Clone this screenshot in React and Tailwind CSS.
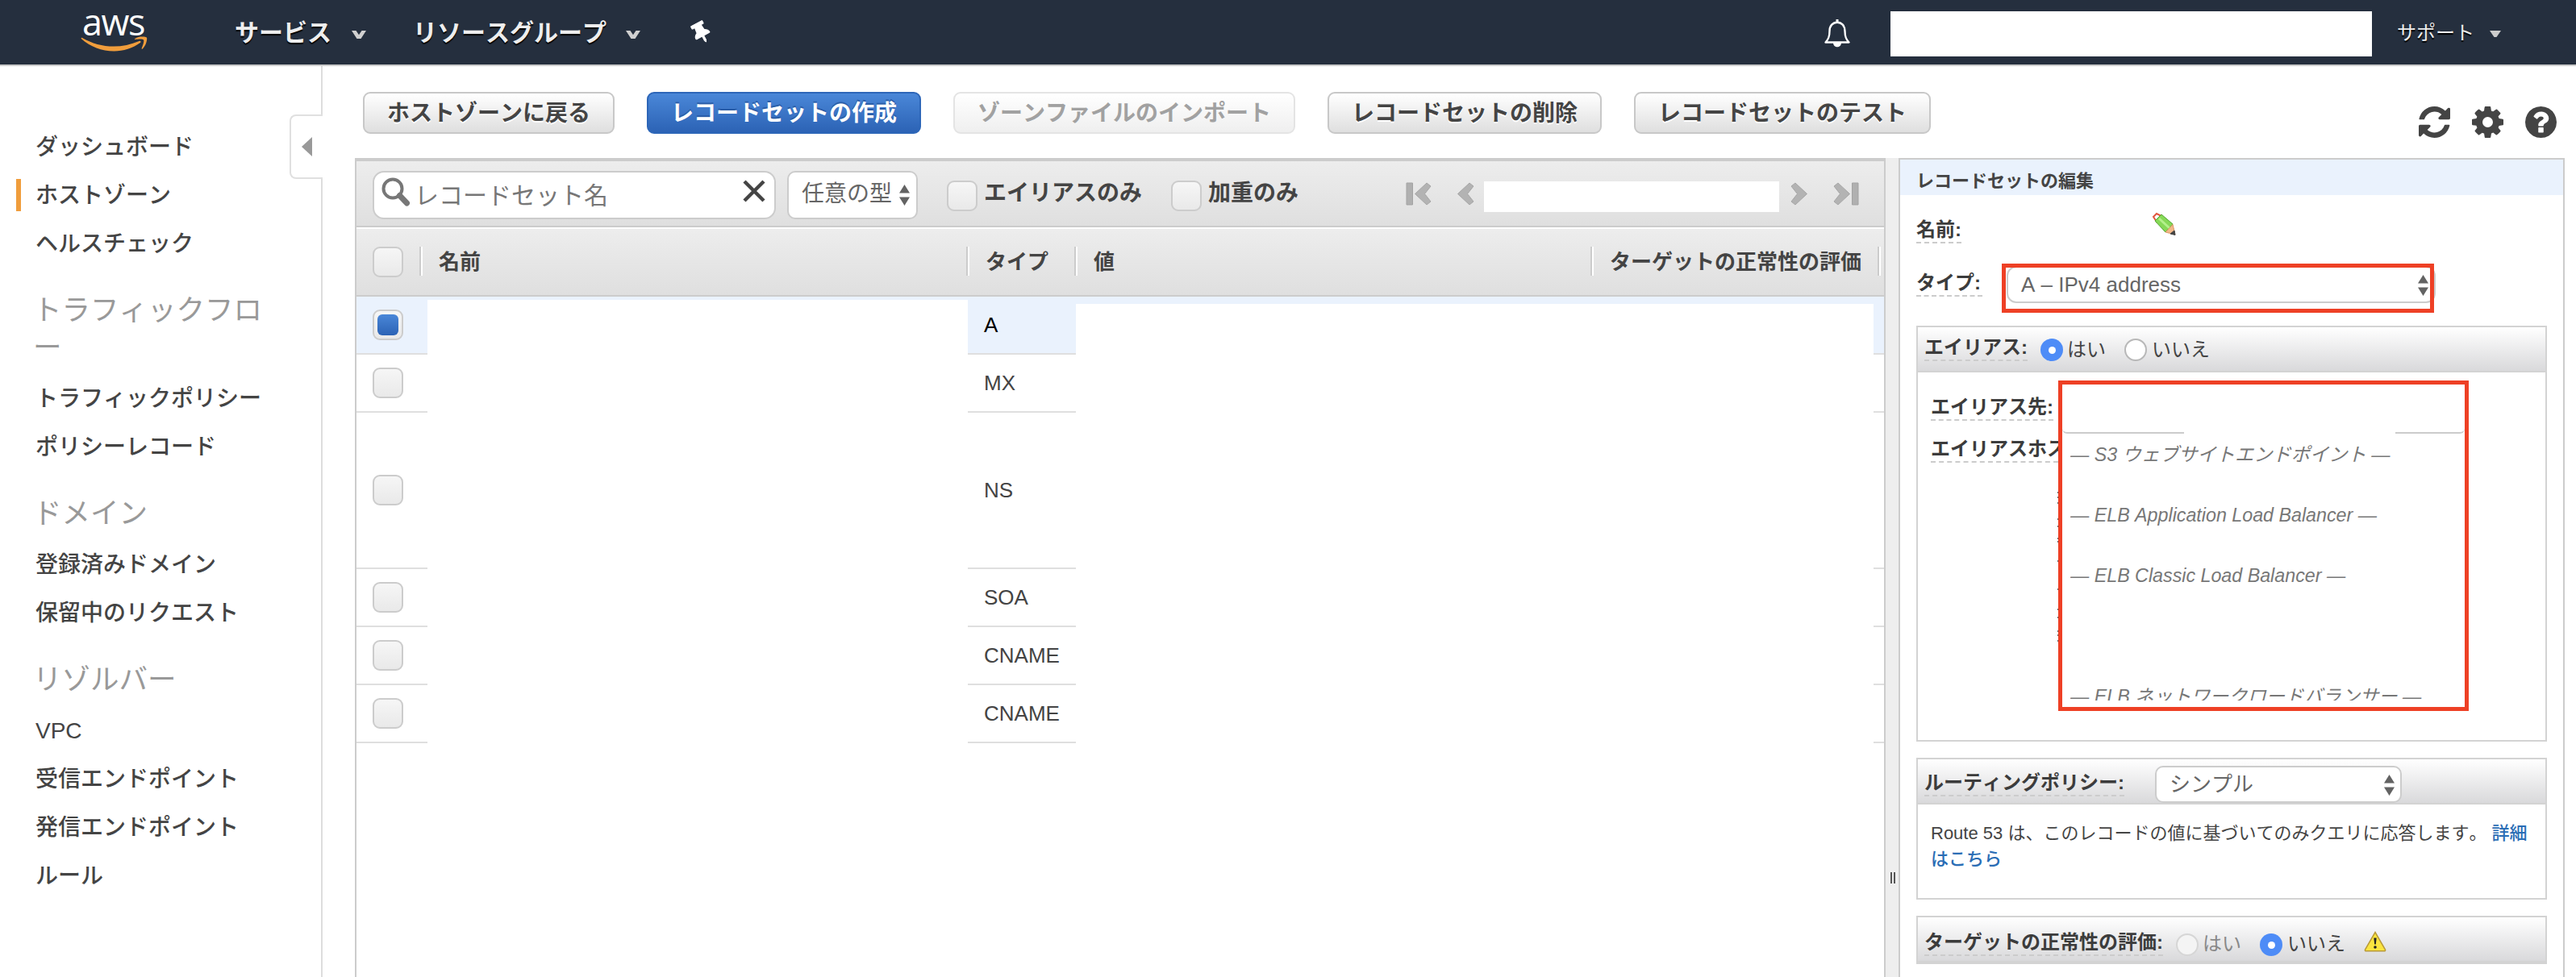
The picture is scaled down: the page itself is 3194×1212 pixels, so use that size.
import clsx from 'clsx';
import { FaThumbtack } from 'react-icons/fa';

const sidebarGroups = [
  { items: ['ダッシュボード', 'ホストゾーン', 'ヘルスチェック'] },
  { title: 'トラフィックフロー', items: ['トラフィックポリシー', 'ポリシーレコード'] },
  { title: 'ドメイン', items: ['登録済みドメイン', '保留中のリクエスト'] },
  { title: 'リゾルバー', items: ['VPC', '受信エンドポイント', '発信エンドポイント', 'ルール'] },
];

const actions = [
  { label: 'ホストゾーンに戻る' },
  { label: 'レコードセットの作成', variant: 'primary' },
  { label: 'ゾーンファイルのインポート', variant: 'disabled' },
  { label: 'レコードセットの削除' },
  { label: 'レコードセットのテスト' },
];

const records = [
  { type: 'A', selected: true },
  { type: 'MX' },
  { type: 'NS', tall: true },
  { type: 'SOA' },
  { type: 'CNAME' },
  { type: 'CNAME' },
];

const aliasTargets = [
  { label: '— S3 ウェブサイトエンドポイント —', gap: 'h-[75px]' },
  { label: '— ELB Application Load Balancer —', gap: 'h-[75px]' },
  { label: '— ELB Classic Load Balancer —', gap: 'h-[150px]' },
  { label: '— ELB ネットワークロードバランサー —', gap: 'h-[30px]' },
];

// edges of the help text that stick out from under the open menu
const helpEdges = [610, 616, 623, 643, 652, 667, 671, 695, 730, 755, 765, 782, 787, 794];

function AwsLogo() {
  return (
    <div className="ml-[100px] h-[80px] w-[84px]">
      <div className="h-[44px] pl-[2px] font-['Open_Sans',sans-serif] text-[45px] leading-[54px] tracking-[-1.5px] text-white">
        aws
      </div>
      <svg width="84" height="22" viewBox="0 0 84 22" className="relative" fill="#f09d3c">
        <path d="M1 4.2C.2 3.4.9 2.2 2 2.9 14 9.800 27 13.500 41 13.500c10.500 0 21.500-2.300 31.500-6.600 1.600-.7 2.900 1 1.400 2.200C65 15.800 52.500 19.500 41.500 19.500 26 19.500 12 13.800 1 4.200z" />
        <path d="M76 5.500c-1.200-1.500-7.500-.8-10.400-.4-.9.100-1-.6-.2-1.200 5-3.500 13.500-2.500 14.500-1.300 1 1.200-.3 9.700-5 13.800-.8.700-1.500.300-1.200-.6 1.100-2.700 3.500-8.800 2.300-10.300z" transform="translate(2 0)" />
      </svg>
    </div>
  );
}

function Caret({ className }) {
  return (
    <svg width="18" height="10" viewBox="0 0 18 10" className={className}>
      <path d="M0 0h5.500L9 5.200 12.500 0H18l-6.500 10h-5z" fill="#d0d0d0" />
    </svg>
  );
}

function Bell() {
  return (
    <svg width="34" height="36" viewBox="0 0 34 36" className="mt-[23px]" fill="none" stroke="#fff" strokeWidth="2.400">
      <path d="M17 1v4" strokeWidth="3" />
      <path d="M2.500 29.500c3.500-3.500 5-6.500 5-14 0-6.500 4-10.800 9.500-10.800s9.500 4.300 9.500 10.800c0 7.500 1.500 10.500 5 14z" strokeLinejoin="round" />
      <path d="M12 30c0 7 10 7 10 0z" fill="#fff" stroke="none" />
    </svg>
  );
}

function Header() {
  return (
    <header className="flex h-[82px] border-b-2 border-[#ccc] bg-[#252f3e] text-[#eee]">
      <AwsLogo />
      <nav className="flex flex-1 text-[30px] leading-[81px] font-bold [text-shadow:0_2px_1px_#000]">
        <span className="ml-[107px]">サービス</span>
        <Caret className="mt-[38px] ml-[25px]" />
        <span className="ml-[58px]">リソースグループ</span>
        <Caret className="mt-[38px] ml-[24px]" />
        <FaThumbtack className="mt-[27px] ml-[62px] -rotate-[28deg] text-white" size={27} />
      </nav>
      <Bell />
      <div className="mt-[14px] ml-[49px] h-[56px] w-[597px] bg-white" />
      <span className="ml-[31px] text-[24px] leading-[82px] [text-shadow:0_2px_1px_#000]">サポート</span>
      <svg width="14" height="8" viewBox="0 0 14 8" className="mt-[38px] mr-[93px] ml-[19px]">
        <path d="M0 0h14L8.500 8h-3z" fill="#ccc" />
      </svg>
    </header>
  );
}

function Sidebar() {
  return (
    <aside className="relative w-[400px] shrink-0 border-r-2 border-[#ddd] pt-[70px] text-[28px] text-[#444]">
      {sidebarGroups.map((group) => (
        <div key={group.items[0]}>
          {group.title && (
            <h2 className="mt-[30px] mb-[10px] ml-[41px] w-[296px] text-[35.5px] leading-[46px] break-all text-[#999]">
              {group.title}
            </h2>
          )}
          {group.items.map((item) => (
            <div key={item} className="flex h-[60px] items-center">
              <span className={clsx('ml-[20px] h-[40px] w-[6px]', item === 'ホストゾーン' && 'bg-[#f09d3c]')} />
              <span className="ml-[18px] pt-[2px] leading-[58px] font-medium">{item}</span>
            </div>
          ))}
        </div>
      ))}
      <div className="absolute top-[60px] -right-[2px] flex h-[80px] w-[41px] items-center rounded-l-[8px] border-y-2 border-l-2 border-[#e0e0e0] bg-white pl-[13px]">
        <svg width="13" height="24" viewBox="0 0 13 24">
          <path d="M13 0v24L0 12z" fill="#999" />
        </svg>
      </div>
    </aside>
  );
}

function ActionButton({ label, variant }) {
  return (
    <button
      className={clsx(
        'h-[52px] rounded-[9px] border-2 px-[28px] text-[28px] leading-[47px] font-bold whitespace-nowrap',
        !variant && 'border-[#c8c8c8] bg-linear-to-b from-white to-[#dfdfdf] text-[#444] [text-shadow:0_2px_0_#fff]',
        variant === 'primary' && 'border-[#2d66b8] bg-linear-to-b from-[#4a87d8] to-[#2c63b5] text-white [text-shadow:0_-2px_0_#2a5da8]',
        variant === 'disabled' && 'border-[#e4e4e4] bg-linear-to-b from-white to-[#efefef] text-[#a1a1a1]'
      )}
    >
      {label}
    </button>
  );
}

function Checkbox({ checked, className }) {
  return (
    <span
      className={clsx(
        'flex size-[38px] shrink-0 items-center justify-center rounded-[9px] border-2 border-[#ccc] bg-linear-to-b from-[#f6f6f6] to-[#e9e9e9]',
        className
      )}
    >
      {checked && <span className="size-[26px] rounded-[6px] bg-linear-to-b from-[#4a87d8] to-[#2c63b5]" />}
    </span>
  );
}

function Arrows({ className }) {
  return (
    <svg width="13" height="26" viewBox="0 0 13 26" className={className} fill="#636363">
      <path d="M6.500 0L13 10.500H0zM6.500 26L13 15.500H0z" />
    </svg>
  );
}

function Chevron({ bar, flip }) {
  return (
    <svg
      width={bar ? 32 : 22}
      height="29"
      viewBox={bar ? '0 0 32 29' : '10 0 22 29'}
      className={clsx('mt-[26px] shrink-0', flip && '-scale-x-100')}
    >
      {bar && <path d="M1 1h7.500v27H1z" fill="#b0b0b0" stroke="#a3a3a3" />}
      <path d="M26 1l5 4-7.500 9.500L31 24l-5 4L11.500 14.500z" fill="#b3b3b3" stroke="#a6a6a6" />
    </svg>
  );
}

function Toolbar() {
  return (
    <div className="flex h-[82px] border-b-2 border-[#ccc] bg-linear-to-b from-[#ededed] to-[#dfdfdf] text-[28px] text-[#444]">
      <div className="mt-[12px] ml-[20px] flex h-[60px] w-[500px] rounded-[14px] border-2 border-[#ccc] bg-white">
        <svg width="36" height="36" viewBox="0 0 36 36" className="mt-[6px] ml-[9px]" fill="none" stroke="#777">
          <circle cx="14" cy="14" r="11.500" strokeWidth="4" />
          <path d="M22.500 22.500l9 9.500" strokeWidth="7" strokeLinecap="round" />
        </svg>
        <span className="ml-[5px] flex-1 text-[30px] leading-[57px] text-[#777]">レコードセット名</span>
        <svg width="28" height="28" viewBox="0 0 28 28" className="mt-[9px] mr-[11px]">
          <path d="M2 2l24 24M26 2L2 26" stroke="#444" strokeWidth="4.500" />
        </svg>
      </div>
      <div className="mt-[12px] ml-[14px] flex h-[60px] w-[162px] rounded-[10px] border-2 border-[#ccc] bg-white">
        <span className="ml-[16px] leading-[53px] text-[#666]">任意の型</span>
        <Arrows className="mt-[15px] ml-[9px]" />
      </div>
      <Checkbox className="mt-[24px] ml-[36px]" />
      <span className="ml-[8px] w-[196px] leading-[80px] font-bold whitespace-nowrap">エイリアスのみ</span>
      <Checkbox className="mt-[24px] ml-[36px]" />
      <span className="ml-[8px] w-[245px] leading-[80px] font-bold">加重のみ</span>
      <Chevron bar />
      <div className="w-[31px]" />
      <Chevron />
      <div className="mt-[25px] mr-[14px] ml-[12px] h-[38px] w-[366px] bg-white" />
      <Chevron flip />
      <div className="w-[31px]" />
      <Chevron bar flip />
    </div>
  );
}

const Divider = () => <span className="mt-[22px] h-[36px] w-[4px] shrink-0 border-l-2 border-[#ccc] bg-white" />;

function TableHeader() {
  return (
    <div className="mt-[2px] flex h-[84px] border-b-2 border-[#ccc] bg-linear-to-b from-[#ededed] to-[#dfdfdf] text-[26px] leading-[82px] font-bold text-[#444]">
      <div className="w-[78px] pt-[22px] pl-[20px]">
        <Checkbox />
      </div>
      <Divider />
      <span className="w-[674px] pl-[20px]">名前</span>
      <Divider />
      <span className="w-[130px] pl-[20px]">タイプ</span>
      <Divider />
      <span className="w-[636px] pl-[20px]">値</span>
      <Divider />
      <span className="w-[352px] pl-[20px] whitespace-nowrap">ターゲットの正常性の評価</span>
      <Divider />
    </div>
  );
}

function RecordRow({ record }) {
  const cell = clsx('border-b-2 border-[#dfdfdf]', record.selected ? 'bg-[#eaf2fd]' : 'bg-white');

  return (
    <div className={clsx('flex', record.tall ? 'h-[194px]' : 'h-[72px]', record.selected && 'bg-[#eaf2fd]')}>
      <div className={clsx('flex w-[88px] items-center pl-[20px]', cell)}>
        <Checkbox checked={record.selected} />
      </div>
      <div className="mt-[4px] w-[670px] bg-white" />
      <div className={clsx('flex w-[134px] items-center pl-[20px] text-[26px]', cell, record.selected ? 'text-black' : 'text-[#444]')}>
        {record.type}
      </div>
      <div className="mt-[9px] w-[989px] bg-white" />
      <div className={clsx('w-[13px]', cell)} />
    </div>
  );
}

function Label({ children, className }) {
  return (
    <span className={clsx('block shrink-0 border-b-2 border-dashed border-[#ccc] text-[24px] leading-[30px] font-bold whitespace-nowrap text-[#3c3c3c]', className)}>
      {children}
    </span>
  );
}

function Radio({ checked, disabled }) {
  return (
    <span
      className={clsx(
        'flex size-[28px] shrink-0 items-center justify-center rounded-full',
        checked && 'bg-[#4e8cf7]',
        !checked && 'border-2',
        !checked && (disabled ? 'border-[#d6d6d6] bg-[#f4f4f4]' : 'border-[#b8b8b8] bg-white')
      )}
    >
      {checked && <span className="size-[9px] rounded-full bg-white" />}
    </span>
  );
}

function Section({ header, children, className }) {
  return (
    <section className={clsx('ml-[20px] w-[782px] border-2 border-[#d3d3d3]', className)}>
      <div className="flex h-[56px] border-b-2 border-[#d3d3d3] bg-linear-to-b from-white to-[#d9d9db] pl-[8px] text-[24px] text-[#444]">
        {header}
      </div>
      {children}
    </section>
  );
}

function AliasMenu() {
  return (
    <div className="absolute top-[10px] left-[174px] h-[410px] w-[509px] overflow-hidden border-[5px] border-[#ee4025] bg-white">
      <div className="flex h-[61px] justify-between">
        <span className="w-[151px] rounded-bl-[6px] border-b-2 border-[#ccc]" />
        <span className="w-[86px] rounded-br-[6px] border-b-2 border-[#ccc]" />
      </div>
      <div className="mt-[10px] ml-[10px] h-[321px] overflow-hidden text-[23.25px] leading-[33px] whitespace-nowrap text-[#777] italic">
        {aliasTargets.map((target) => (
          <div key={target.label} className={target.gap}>
            {target.label}
          </div>
        ))}
      </div>
    </div>
  );
}

function Warning() {
  return (
    <svg width="28" height="26" viewBox="0 0 28 26" className="mt-[17px] ml-[23px]">
      <path d="M14 1.500L26.500 23c.4 1-.1 1.800-1.200 1.800H2.700c-1.100 0-1.600-.8-1.200-1.800z" fill="#fbe53f" stroke="#b99a36" strokeWidth="1.500" />
      <path d="M12.300 8.500h3.400l-.9 8h-1.600z" fill="#222" />
      <circle cx="14" cy="20" r="1.800" fill="#222" />
    </svg>
  );
}

function Pencil() {
  return (
    <svg width="30" height="30" viewBox="0 0 30 30" className="mt-[21px] ml-[236px]">
      <path d="M2 6L6 2 12 5 6 12z" fill="#fff" stroke="#e0573f" strokeWidth="2" />
      <path d="M4 11L12 3l14 12-9 10z" fill="#86d957" stroke="#4fa52d" />
      <path d="M9 8l13 12" stroke="#b4f08c" strokeWidth="3" />
      <path d="M17 25l9-9.500 3 12.500z" fill="#f2b98a" stroke="#d99763" />
      <path d="M23 27l5-4 1 5.500z" fill="#444" stroke="#444" />
    </svg>
  );
}

function EditPanel() {
  return (
    <div className="h-[1016px] w-[826px] shrink-0 border-2 border-b-0 border-[#ccc] bg-white">
      <h3 className="h-[44px] bg-[#eaf2fd] pl-[20px] text-[22px] leading-[53px] font-bold text-[#444]">レコードセットの編集</h3>

      <div className="flex h-[64px] pl-[20px]">
        <Label className="mt-[28px] h-[32px]">名前:</Label>
        <Pencil />
      </div>

      <div className="relative flex h-[98px] pl-[20px]">
        <Label className="mt-[30px] h-[32px] w-[82px]">タイプ:</Label>
        <div className="mt-[24px] ml-[30px] flex h-[46px] w-[532px] rounded-[12px] border-2 border-[#ccc] bg-white">
          <span className="ml-[16px] flex-1 text-[26px] leading-[43px] text-[#666]">A – IPv4 address</span>
          <Arrows className="mt-[9px] mr-[7px]" />
        </div>
        <div className="absolute top-[21px] left-[126px] h-[61px] w-[536px] border-[5px] border-[#ee4025]" />
      </div>

      <Section
        className="h-[516px]"
        header={
          <>
            <Label className="mt-[10px] h-[32px]">エイリアス:</Label>
            <div className="mt-[14px] ml-[16px] flex leading-[27px]">
              <Radio checked />
              <span className="mr-[23px] ml-[5px]">はい</span>
              <Radio />
              <span className="ml-[6px]">いいえ</span>
            </div>
          </>
        }
      >
        <div className="relative h-[456px] pl-[16px]">
          <div className="flex pt-[28px]">
            <Label className="h-[32px]">エイリアス先:</Label>
          </div>
          <div className="flex pt-[20px]">
            <Label className="h-[32px] w-[158px] overflow-hidden">エイリアスホス</Label>
          </div>
          {helpEdges.map((y) => (
            <span key={y} className="absolute left-[173px] h-[2px] w-[2px] bg-[#666]" style={{ top: y - 462 }} />
          ))}
          <AliasMenu />
        </div>
      </Section>

      <Section
        className="mt-[20px] h-[176px]"
        header={
          <>
            <Label className="mt-[14px] h-[32px]">ルーティングポリシー:</Label>
            <div className="mt-[8px] ml-[38px] flex h-[46px] w-[306px] rounded-[10px] border-2 border-[#ccc] bg-white">
              <span className="ml-[16px] flex-1 text-[26px] leading-[42px] text-[#666]">シンプル</span>
              <Arrows className="mt-[9px] mr-[7px]" />
            </div>
          </>
        }
      >
        <p className="pt-[20px] pr-[20px] pl-[16px] text-[22px] leading-[32px] text-[#444]">
          Route 53 は、このレコードの値に基づいてのみクエリに応答します。 <a className="font-medium text-[#2a6db5]">詳細はこちら</a>
        </p>
      </Section>

      <Section
        className="mt-[20px] h-[60px]"
        header={
          <>
            <Label className="mt-[16px] h-[32px]">ターゲットの正常性の評価:</Label>
            <div className="mt-[20px] ml-[16px] flex leading-[26px]">
              <Radio disabled />
              <span className="mr-[23px] ml-[5px] text-[#888]">はい</span>
              <Radio checked />
              <span className="ml-[6px]">いいえ</span>
            </div>
            <Warning />
          </>
        }
      />
    </div>
  );
}

function PageIcons() {
  return (
    <div className="mt-[50px] mr-[24px] ml-auto flex h-[39px] gap-[27px]">
      <svg width="39" height="39" viewBox="128 128 1536 1536" fill="#444">
        <path d="M1639 1056q0 5-1 7-64 268-268 434.500t-478 166.500q-146 0-282.500-55t-243.500-157l-129 129q-19 19-45 19t-45-19-19-45v-448q0-26 19-45t45-19h448q26 0 45 19t19 45-19 45l-137 137q71 66 161 102t187 36q134 0 250-65t186-179q11-17 53-117 8-23 30-23h192q13 0 22.500 9.500t9.500 22.500zm25-800v448q0 26-19 45t-45 19h-448q-26 0-45-19t-19-45 19-45l138-138q-148-137-349-137-134 0-250 65t-186 179q-11 17-53 117-8 23-30 23h-199q-13 0-22.500-9.500t-9.500-22.500v-7q65-268 270-434.500t480-166.500q146 0 284 55.500t245 156.500l130-129q19-19 45-19t45 19 19 45z" />
      </svg>
      <svg width="39" height="39" viewBox="128 128 1536 1536" fill="#444">
        <path d="M1152 896q0-106-75-181t-181-75-181 75-75 181 75 181 181 75 181-75 75-181zm512-109v222q0 12-8 23t-20 13l-185 28q-19 54-39 91 35 50 107 138 10 12 10 25t-9 23q-27 37-99 108t-94 71q-12 0-26-9l-138-108q-44 23-91 38-16 136-29 186-7 28-36 28h-222q-14 0-24.500-8.500t-11.500-21.500l-28-184q-49-16-90-37l-141 107q-10 9-25 9-14 0-25-11-126-114-165-168-7-10-7-23 0-12 8-23 15-21 51-66.500t54-70.500q-27-50-41-99l-183-27q-13-2-21-12.500t-8-23.500v-222q0-12 8-23t19-13l186-28q14-46 39-92-40-57-107-138-10-12-10-24 0-10 9-23 26-36 98.500-107.500t94.500-71.500q13 0 26 10l138 107q44-23 91-38 16-136 29-186 7-28 36-28h222q14 0 24.500 8.500t11.500 21.500l28 184q49 16 90 37l142-107q9-9 24-9 13 0 25 10 129 119 165 170 7 8 7 22 0 12-8 23-15 21-51 66.500t-54 70.500q26 50 41 98l183 28q13 2 21 12.500t8 23.500z" />
      </svg>
      <svg width="39" height="39" viewBox="128 128 1536 1536" fill="#444">
        <path d="M1024 1376v-192q0-14-9-23t-23-9h-192q-14 0-23 9t-9 23v192q0 14 9 23t23 9h192q14 0 23-9t9-23zm256-672q0-88-55.500-163t-138.500-116-170-41q-243 0-371 213-15 24 8 42l132 100q7 6 19 6 16 0 25-12 53-68 86-92 34-24 86-24 48 0 85.500 26t37.500 59q0 38-20 61t-68 45q-63 28-115.500 86.500t-52.500 125.500v36q0 14 9 23t23 9h192q14 0 23-9t9-23q0-19 21.500-49.500t54.500-49.500q32-18 49-28.500t46-35 44.500-48 28-60.500 12.500-81zm384 192q0 209-103 385.500t-279.500 279.500-385.500 103-385.500-103-279.500-279.500-103-385.500 103-385.500 279.500-279.500 385.500-103 385.500 103 279.500 279.500 103 385.500z" />
      </svg>
    </div>
  );
}

export default function App() {
  return (
    <div className="h-[1212px] w-[3194px] overflow-hidden bg-white font-['Liberation_Sans','Noto_Sans_CJK_JP',sans-serif] [font-kerning:none]">
      <Header />
      <div className="flex h-[1130px]">
        <Sidebar />
        <main className="flex-1">
          <div className="flex h-[114px]">
            <div className="mt-[32px] ml-[50px] flex gap-[40px]">
              {actions.map((action) => (
                <ActionButton key={action.label} {...action} />
              ))}
            </div>
            <PageIcons />
          </div>
          <div className="ml-[40px] flex">
            <div className="h-[1016px] w-[1898px] shrink-0 border-x-2 border-t-4 border-[#ccc] bg-white">
              <Toolbar />
              <TableHeader />
              {records.map((record, i) => (
                <RecordRow key={i} record={record} />
              ))}
            </div>
            <div className="flex w-[16px] shrink-0 justify-center gap-[2px] bg-[#eee] pt-[886px] pl-px">
              <span className="h-[14px] w-[2px] bg-[#555]" />
              <span className="h-[14px] w-[2px] bg-[#555]" />
            </div>
            <EditPanel />
          </div>
        </main>
      </div>
    </div>
  );
}
